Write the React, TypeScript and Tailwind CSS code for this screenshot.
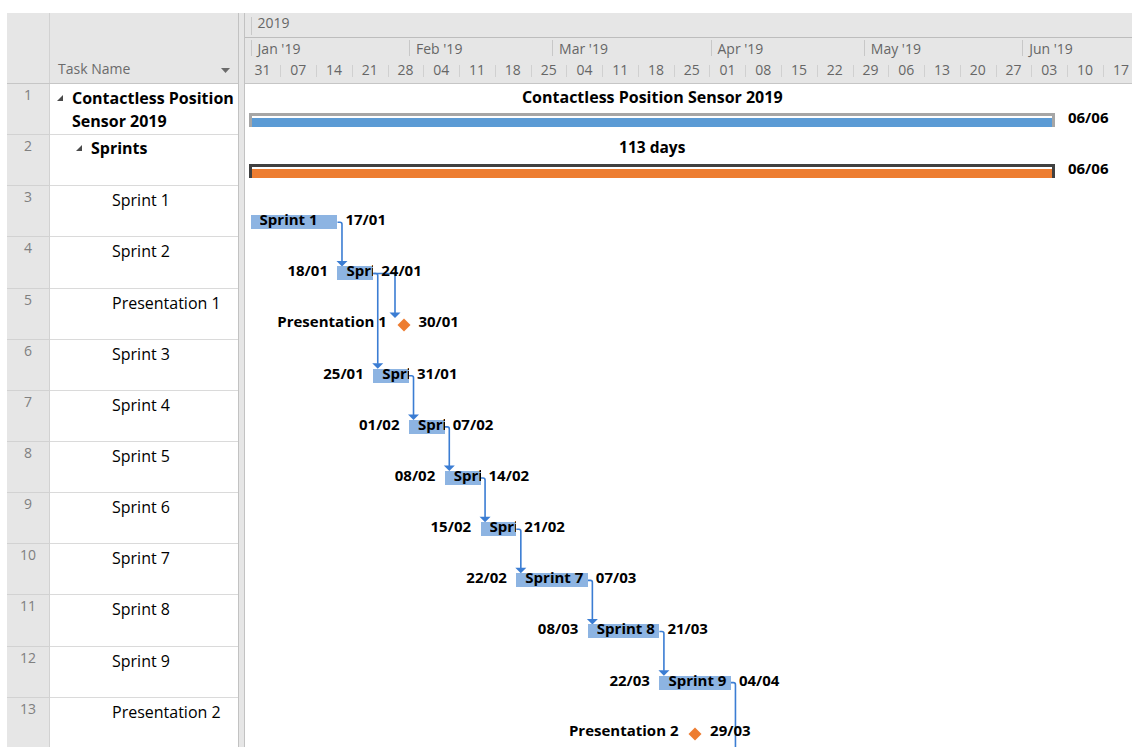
import React from 'react';

// Timescale geometry: one day = 5.11px, day 0 = Mon 31 Dec 2018
const ROW_H = 51.15;
const DAY_W = 5.11;
const X0 = 0.5;
const BAR_OFF = 29;
const xd = (d: number) => X0 + d * DAY_W;
const rowTop = (r: number) => (r - 1) * ROW_H;
const barTop = (r: number) => rowTop(r) + BAR_OFF;

type TableRow = { id: number; name: string; indent: 0 | 1 | 2 };

const tableRows: TableRow[] = [
  { id: 1, name: 'Contactless Position Sensor 2019', indent: 0 },
  { id: 2, name: 'Sprints', indent: 1 },
  { id: 3, name: 'Sprint 1', indent: 2 },
  { id: 4, name: 'Sprint 2', indent: 2 },
  { id: 5, name: 'Presentation 1', indent: 2 },
  { id: 6, name: 'Sprint 3', indent: 2 },
  { id: 7, name: 'Sprint 4', indent: 2 },
  { id: 8, name: 'Sprint 5', indent: 2 },
  { id: 9, name: 'Sprint 6', indent: 2 },
  { id: 10, name: 'Sprint 7', indent: 2 },
  { id: 11, name: 'Sprint 8', indent: 2 },
  { id: 12, name: 'Sprint 9', indent: 2 },
  { id: 13, name: 'Presentation 2', indent: 2 },
];

type Task = { row: number; name: string; start: number; end: number; from?: string; to: string };

const tasks: Task[] = [
  { row: 3, name: 'Sprint 1', start: 1, end: 18, to: '17/01' },
  { row: 4, name: 'Sprint 2', start: 18, end: 25, from: '18/01', to: '24/01' },
  { row: 6, name: 'Sprint 3', start: 25, end: 32, from: '25/01', to: '31/01' },
  { row: 7, name: 'Sprint 4', start: 32, end: 39, from: '01/02', to: '07/02' },
  { row: 8, name: 'Sprint 5', start: 39, end: 46, from: '08/02', to: '14/02' },
  { row: 9, name: 'Sprint 6', start: 46, end: 53, from: '15/02', to: '21/02' },
  { row: 10, name: 'Sprint 7', start: 53, end: 67, from: '22/02', to: '07/03' },
  { row: 11, name: 'Sprint 8', start: 67, end: 81, from: '08/03', to: '21/03' },
  { row: 12, name: 'Sprint 9', start: 81, end: 95, from: '22/03', to: '04/04' },
];

type Milestone = { row: number; name: string; cx: number; date: string };

const milestones: Milestone[] = [
  { row: 5, name: 'Presentation 1', cx: 158.6, date: '30/01' },
  { row: 13, name: 'Presentation 2', cx: 450.3, date: '29/03' },
];

const months = [
  { label: "Jan '19", days: 31 },
  { label: "Feb '19", days: 28 },
  { label: "Mar '19", days: 31 },
  { label: "Apr '19", days: 30 },
  { label: "May '19", days: 31 },
  { label: "Jun '19", days: 30 },
];

const weeks = [
  '31', '07', '14', '21', '28', '04', '11', '18', '25', '04', '11', '18', '25',
  '01', '08', '15', '22', '29', '06', '13', '20', '27', '03', '10', '17',
];

type Link = { x1: number; y1: number; xv: number; y2: number };

const taskAt = (r: number) => tasks.find((t) => t.row === r)!;

const chain: [number, number][] = [
  [3, 4], [4, 6], [6, 7], [7, 8], [8, 9], [9, 10], [10, 11], [11, 12],
];

const links: Link[] = [
  ...chain.map(([a, b]) => ({
    x1: xd(taskAt(a).end),
    y1: barTop(a) + 7,
    xv: xd(taskAt(b).start) + 4.5,
    y2: barTop(b),
  })),
  { x1: xd(25), y1: barTop(4) + 7, xv: 150, y2: rowTop(5) + 29.5 },
  { x1: xd(95), y1: barTop(12) + 7, xv: xd(95) + 4.5, y2: 720 },
];

const LINK = '#3b7dd3';
const chartText = 'absolute whitespace-nowrap text-[15px] leading-[20px] font-bold text-black';

function Collapse() {
  return (
    <svg width="6" height="6" viewBox="0 0 6 6" className="shrink-0 mt-[8px]">
      <polygon points="6,0 6,6 0,6" fill="#4a4a4a" />
    </svg>
  );
}

function TableRowView({ row }: { row: TableRow }) {
  return (
    <div className="h-[51.15px] shrink-0 flex">
      <div className="w-[43px] shrink-0 bg-[#e6e6e6] border-r border-b border-[#d2d2d2] text-center text-[14px] leading-[16px] pt-[3px] text-[#808080]">
        {row.id}
      </div>
      {row.indent === 0 && (
        <div className="flex-1 flex items-start bg-white border-b border-[#dadada] pt-[3px] pl-[7px] pr-[4px]">
          <Collapse />
          <span className="ml-[9px] text-[16px] leading-[23px] font-bold text-black">{row.name}</span>
        </div>
      )}
      {row.indent === 1 && (
        <div className="flex-1 flex items-start bg-white border-b border-[#dadada] pt-[2px] pl-[26px]">
          <Collapse />
          <span className="ml-[9px] text-[16px] leading-[23px] font-bold text-black">{row.name}</span>
        </div>
      )}
      {row.indent === 2 && (
        <div className="flex-1 bg-white border-b border-[#dadada] pt-[3px] pl-[62px] text-[16px] leading-[23px] text-black">
          {row.name}
        </div>
      )}
    </div>
  );
}

function TaskTable() {
  return (
    <div className="w-[231px] shrink-0 flex flex-col">
      <div className="h-[71px] shrink-0 flex bg-[#e6e6e6] border-b border-[#c6c6c6]">
        <div className="w-[43px] shrink-0 border-r border-[#d2d2d2]" />
        <div className="flex-1 flex items-end justify-between pl-[8px] pr-[8px] pb-[5px]">
          <span className="text-[14px] leading-[18px] text-[#6b6b6b]">Task Name</span>
          <svg width="9" height="5" viewBox="0 0 9 5" className="mb-[5px]">
            <polygon points="0,0 9,0 4.5,5" fill="#6b6b6b" />
          </svg>
        </div>
      </div>
      {tableRows.map((r) => (
        <TableRowView key={r.id} row={r} />
      ))}
    </div>
  );
}

function Timescale() {
  return (
    <div className="h-[71px] shrink-0 flex flex-col bg-[#e6e6e6]">
      <div className="h-[25px] shrink-0 flex border-b border-[#bdbdbd]">
        <div className="shrink-0" style={{ width: xd(1) }} />
        <div className="flex items-start">
          <div className="w-px h-[18px] mt-[4px] bg-[#c8c8c8]" />
          <span className="ml-[6px] pt-[1px] text-[14px] leading-[18px] text-[#666666]">2019</span>
        </div>
      </div>
      <div className="h-[20px] shrink-0 flex">
        <div className="shrink-0" style={{ width: xd(1) }} />
        {months.map((m) => (
          <div key={m.label} className="shrink-0 flex items-start" style={{ width: m.days * DAY_W }}>
            <div className="w-px h-[16px] mt-[2px] bg-[#c8c8c8]" />
            <span className="ml-[6px] pt-[1.5px] text-[14px] leading-[18px] text-[#666666] whitespace-nowrap">
              {m.label}
            </span>
          </div>
        ))}
      </div>
      <div className="h-[26px] shrink-0 flex pl-[0.5px] border-b border-[#c6c6c6]">
        {weeks.map((w, i) => (
          <div key={i} className="w-[35.77px] shrink-0 flex items-start">
            <span className="flex-1 pl-[9px] pt-[2.5px] text-[14px] leading-[18px] text-[#666666]">{w}</span>
            <div className="w-px h-[12px] mt-[7px] bg-[#d0d0d0]" />
          </div>
        ))}
      </div>
    </div>
  );
}

function SummaryRow({
  title,
  titleClass,
  frame,
  fill,
}: {
  title: string;
  titleClass: string;
  frame: string;
  fill: string;
}) {
  const l = xd(1) - 1.6;
  const r = xd(158) + 2.6;
  return (
    <div className="relative h-[51.15px] shrink-0">
      <span
        className={`absolute whitespace-nowrap leading-[20px] font-bold text-black -translate-x-1/2 ${titleClass}`}
        style={{ left: (l + r) / 2 }}
      >
        {title}
      </span>
      <div className={`absolute top-[29px] h-[14px] border-t-[3px] border-x-[3.5px] ${frame}`} style={{ left: l, width: r - l }}>
        <div className={`mt-[2px] h-[9px] ${fill}`} />
      </div>
      <span className={`${chartText} top-[22.5px]`} style={{ left: r + 12.5 }}>
        06/06
      </span>
    </div>
  );
}

function TaskRow({ t }: { t: Task }) {
  const l = xd(t.start);
  const r = xd(t.end);
  return (
    <div className="relative h-[51.15px] shrink-0">
      {t.from && (
        <span className={`${chartText} top-[23px] -translate-x-full`} style={{ left: l - 9.5 }}>
          {t.from}
        </span>
      )}
      <div className="absolute top-[29px] h-[14px] bg-[#8db4e2]" style={{ left: l, width: r - l }} />
      <span className={`${chartText} top-[23px] overflow-hidden`} style={{ left: l + 9, width: r - l - 9 }}>
        {t.name}
      </span>
      <span className={`${chartText} top-[23px]`} style={{ left: r + 8 }}>
        {t.to}
      </span>
    </div>
  );
}

function MilestoneRow({ m }: { m: Milestone }) {
  return (
    <div className="relative h-[51.15px] shrink-0">
      <span className={`${chartText} top-[22.8px] -translate-x-full`} style={{ left: m.cx - 16.8 }}>
        {m.name}
      </span>
      <svg width="14" height="14" viewBox="0 0 14 14" className="absolute top-[29.5px]" style={{ left: m.cx - 7 }}>
        <polygon points="7,0.5 13.5,7 7,13.5 0.5,7" fill="#ed7d31" />
      </svg>
      <span className={`${chartText} top-[22.8px]`} style={{ left: m.cx + 14.8 }}>
        {m.date}
      </span>
    </div>
  );
}

function LinkLine({ l }: { l: Link }) {
  const d = `M${l.x1} ${l.y1} H${l.xv - 2} Q${l.xv} ${l.y1} ${l.xv} ${l.y1 + 2} V${l.y2 - 5}`;
  return (
    <g>
      <path d={d} stroke={LINK} strokeWidth={1.6} fill="none" />
      <polygon points={`${l.xv - 5.5},${l.y2 - 5.5} ${l.xv + 5.5},${l.y2 - 5.5} ${l.xv},${l.y2}`} fill={LINK} />
    </g>
  );
}

function Chart() {
  return (
    <div className="flex-1 min-w-0 flex flex-col">
      <Timescale />
      <div className="relative flex-1 overflow-hidden bg-white">
        <svg className="absolute inset-0" width="887" height="663">
          {links.map((l, i) => (
            <LinkLine key={i} l={l} />
          ))}
        </svg>
        <div className="relative flex flex-col">
          <SummaryRow
            title="Contactless Position Sensor 2019"
            titleClass="top-[2.5px] text-[16px]"
            frame="border-[#a6a6a6]"
            fill="bg-[#5b9bd5]"
          />
          <SummaryRow
            title="113 days"
            titleClass="top-[1.5px] text-[15.5px]"
            frame="border-[#404040]"
            fill="bg-[#ed7d31]"
          />
          {Array.from({ length: 11 }, (_, i) => i + 3).map((r) => {
            const t = tasks.find((x) => x.row === r);
            if (t) return <TaskRow key={r} t={t} />;
            const m = milestones.find((x) => x.row === r)!;
            return <MilestoneRow key={r} m={m} />;
          })}
        </div>
      </div>
    </div>
  );
}

export default function App() {
  return (
    <div className="w-[1132px] h-[747px] overflow-hidden bg-white flex pt-[13px] pl-[7px] font-['Open_Sans',sans-serif] text-black">
      <TaskTable />
      <div className="w-[7px] shrink-0 bg-[#e6e6e6] border-x border-[#c2c2c2]" />
      <Chart />
    </div>
  );
}
